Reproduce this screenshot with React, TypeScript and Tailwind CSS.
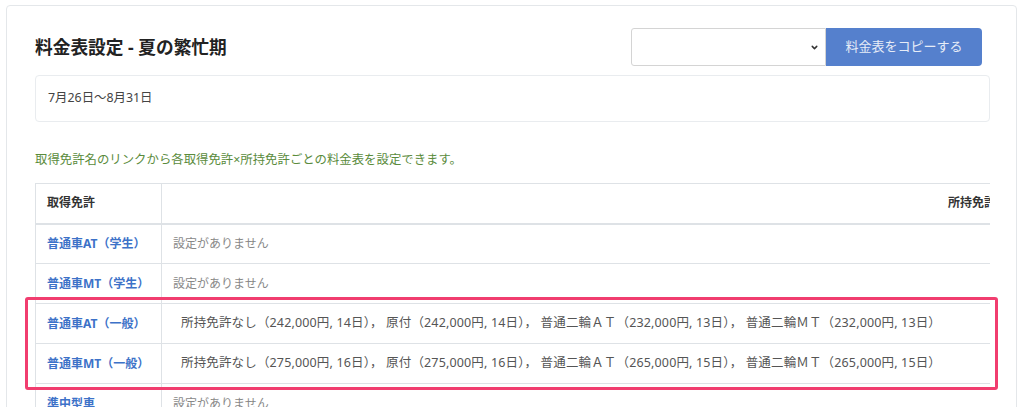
import { ChevronDown } from "lucide-react"

type Row = {
  name: string
  prices?: { label: string; price: string; days: string }[]
}

const rows: Row[] = [
  { name: "普通車AT（学生）" },
  { name: "普通車MT（学生）" },
  {
    name: "普通車AT（一般）",
    prices: [
      { label: "所持免許なし", price: "242,000円", days: "14日" },
      { label: "原付", price: "242,000円", days: "14日" },
      { label: "普通二輪ＡＴ", price: "232,000円", days: "13日" },
      { label: "普通二輪ＭＴ", price: "232,000円", days: "13日" },
    ],
  },
  {
    name: "普通車MT（一般）",
    prices: [
      { label: "所持免許なし", price: "275,000円", days: "16日" },
      { label: "原付", price: "275,000円", days: "16日" },
      { label: "普通二輪ＡＴ", price: "265,000円", days: "15日" },
      { label: "普通二輪ＭＴ", price: "265,000円", days: "15日" },
    ],
  },
  { name: "準中型車" },
]

export default function App() {
  return (
    <div
      className="relative h-[407px] overflow-hidden bg-white pt-[5px] pl-[6px] pr-[7px]"
      style={{ fontFamily: '"Noto Sans", "Noto Sans CJK JP", sans-serif' }}
    >
      <div className="rounded-[4px] border border-[#e4e7ea] bg-white pt-[22px] pl-[28px] pr-[26px] pb-6">
        {/* Header */}
        <div className="flex h-[38px] items-center justify-between">
          <h1 className="text-[17.7px] font-bold text-[#222]">料金表設定 - 夏の繁忙期</h1>
          <div className="mr-[8px] flex h-[38px]">
            <div className="relative h-[38px] w-[195px] rounded-l-[3px] border border-[#d4d4d4] bg-white">
              <ChevronDown
                className="absolute right-[6px] top-[14px] h-[9px] w-[9px] text-[#333]"
                strokeWidth={4}
              />
            </div>
            <button className="h-[38px] w-[156px] rounded-r-[4px] bg-[#5580cd] text-[13px] text-[#e6ecf7]">
              料金表をコピーする
            </button>
          </div>
        </div>

        {/* Period */}
        <div className="mt-[9px] flex h-[47px] items-center rounded-[4px] border border-[#e9ecef] px-[12px] text-[12.4px] text-[#444]">
          7月26日〜8月31日
        </div>

        <p className="mt-[29px] text-[12.4px] leading-[18px] text-[#5a8b3c]">
          取得免許名のリンクから各取得免許×所持免許ごとの料金表を設定できます。
        </p>

        {/* Table */}
        <div className="mt-[14px] overflow-hidden">
          <table className="w-[1748px] border-collapse text-[12px]">
            <thead>
              <tr className="h-[40px]">
                <th className="w-[126px] border border-b-2 border-[#dee2e6] px-[11px] text-left font-bold text-[#333]">
                  取得免許
                </th>
                <th className="border border-b-2 border-[#dee2e6] px-[11px] text-center font-bold text-[#333]">
                  所持免許
                </th>
              </tr>
            </thead>
            <tbody>
              {rows.map((row) => (
                <tr key={row.name} className="h-[40px]">
                  <td className="border border-[#dee2e6] px-[11px] font-bold text-[#3d72c8]">
                    {row.name}
                  </td>
                  <td className="border border-[#dee2e6] px-[11px]">
                    {row.prices ? (
                      <span className="pl-[8px] text-[12.5px] tracking-[0.15px] text-[#555]">
                        {row.prices
                          .map((p) => `${p.label}（${p.price}, ${p.days}）`)
                          .join("， ")}
                      </span>
                    ) : (
                      <span className="text-[#888]">設定がありません</span>
                    )}
                  </td>
                </tr>
              ))}
            </tbody>
          </table>
        </div>
      </div>

      {/* Highlight annotation */}
      <div className="absolute left-[25px] top-[297px] h-[93px] w-[973px] rounded-[3px] border-[3px] border-[#f13d6f]" />
    </div>
  )
}
